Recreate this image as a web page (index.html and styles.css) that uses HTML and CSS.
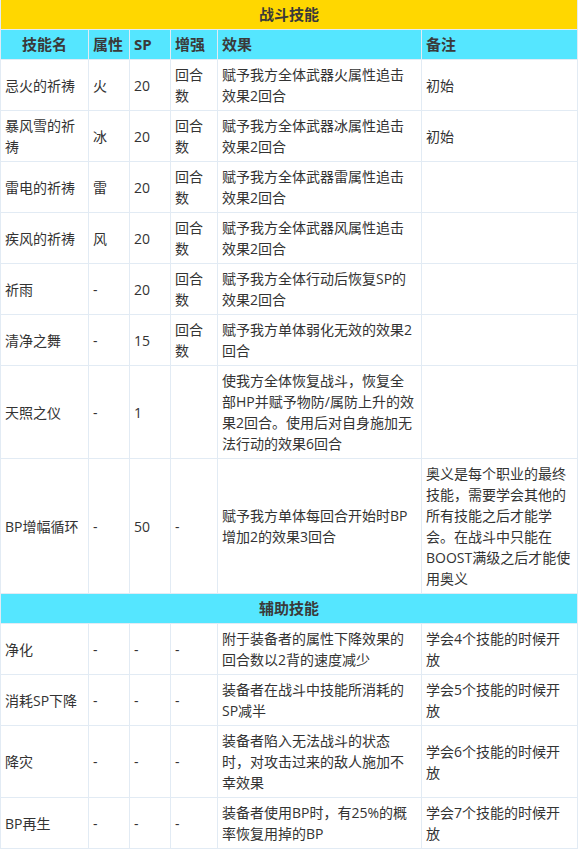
FILE: index.html
```html
<!DOCTYPE html>
<html lang="zh-CN">
<head>
<meta charset="utf-8">
<title>技能</title>
<link rel="stylesheet" href="styles.css">
</head>
<body>
<table class="skills">
  <colgroup>
    <col class="c-name"><col class="c-attr"><col class="c-sp"><col class="c-up"><col class="c-eff"><col class="c-note">
  </colgroup>
  <tbody>
    <tr class="first"><th colspan="6" class="title gold">战斗技能</th></tr>
    <tr class="head">
      <th class="center">技能名</th><th>属性</th><th>SP</th><th>增强</th><th>效果</th><th>备注</th>
    </tr>
    <tr><td>忌火的祈祷</td><td>火</td><td>20</td><td>回合<br>数</td><td>赋予我方全体武器火属性追击<br>效果2回合</td><td>初始</td></tr>
    <tr><td>暴风雪的祈<br>祷</td><td>冰</td><td>20</td><td>回合<br>数</td><td>赋予我方全体武器冰属性追击<br>效果2回合</td><td>初始</td></tr>
    <tr><td>雷电的祈祷</td><td>雷</td><td>20</td><td>回合<br>数</td><td>赋予我方全体武器雷属性追击<br>效果2回合</td><td></td></tr>
    <tr><td>疾风的祈祷</td><td>风</td><td>20</td><td>回合<br>数</td><td>赋予我方全体武器风属性追击<br>效果2回合</td><td></td></tr>
    <tr><td>祈雨</td><td>-</td><td>20</td><td>回合<br>数</td><td>赋予我方全体行动后恢复SP的<br>效果2回合</td><td></td></tr>
    <tr><td>清净之舞</td><td>-</td><td>15</td><td>回合<br>数</td><td>赋予我方单体弱化无效的效果2<br>回合</td><td></td></tr>
    <tr><td>天照之仪</td><td>-</td><td>1</td><td></td><td>使我方全体恢复战斗，恢复全<br>部HP并赋予物防/属防上升的效<br>果2回合。使用后对自身施加无<br>法行动的效果6回合</td><td></td></tr>
    <tr><td>BP增幅循环</td><td>-</td><td>50</td><td>-</td><td>赋予我方单体每回合开始时BP<br>增加2的效果3回合</td><td>奥义是每个职业的最终<br>技能，需要学会其他的<br>所有技能之后才能学<br>会。在战斗中只能在<br>BOOST满级之后才能使<br>用奥义</td></tr>
    <tr><th colspan="6" class="title cyan">辅助技能</th></tr>
    <tr><td>净化</td><td>-</td><td>-</td><td>-</td><td>附于装备者的属性下降效果的<br>回合数以2背的速度减少</td><td>学会4个技能的时候开<br>放</td></tr>
    <tr><td>消耗SP下降</td><td>-</td><td>-</td><td>-</td><td>装备者在战斗中技能所消耗的<br>SP减半</td><td>学会5个技能的时候开<br>放</td></tr>
    <tr><td>降灾</td><td>-</td><td>-</td><td>-</td><td>装备者陷入无法战斗的状态<br>时，对攻击过来的敌人施加不<br>幸效果</td><td>学会6个技能的时候开<br>放</td></tr>
    <tr><td>BP再生</td><td>-</td><td>-</td><td>-</td><td>装备者使用BP时，有25%的概<br>率恢复用掉的BP</td><td>学会7个技能的时候开<br>放</td></tr>
  </tbody>
</table>
</body>
</html>
```
FILE: styles.css
```css
html, body {
  margin: 0;
  padding: 0;
  background: #ffffff;
}

body {
  font-family: "Open Sans", "Noto Sans CJK SC", sans-serif;
  font-size: 14px;
  color: #333333;
}

.skills {
  border-collapse: collapse;
  table-layout: fixed;
  width: 577px;
}

.c-name { width: 88px; }
.c-attr { width: 41px; }
.c-sp { width: 41px; }
.c-up { width: 47px; }
.c-eff { width: 204px; }
.c-note { width: 156px; }

.skills td,
.skills th {
  border: 1px solid #e2ebf4;
  padding: 4px 4px;
  line-height: 21px;
  vertical-align: middle;
  text-align: left;
  white-space: nowrap;
  overflow: visible;
}

.skills .first th {
  border-top: 0;
}

.skills th {
  font-weight: bold;
  font-size: 15px;
  color: #3a3a3a;
}

.head th {
  background: #55e6ff;
}

.skills th.center {
  text-align: center;
}

.skills th.title {
  text-align: center;
}

.gold {
  background: #ffd700;
}

.cyan {
  background: #55e6ff;
}
```
